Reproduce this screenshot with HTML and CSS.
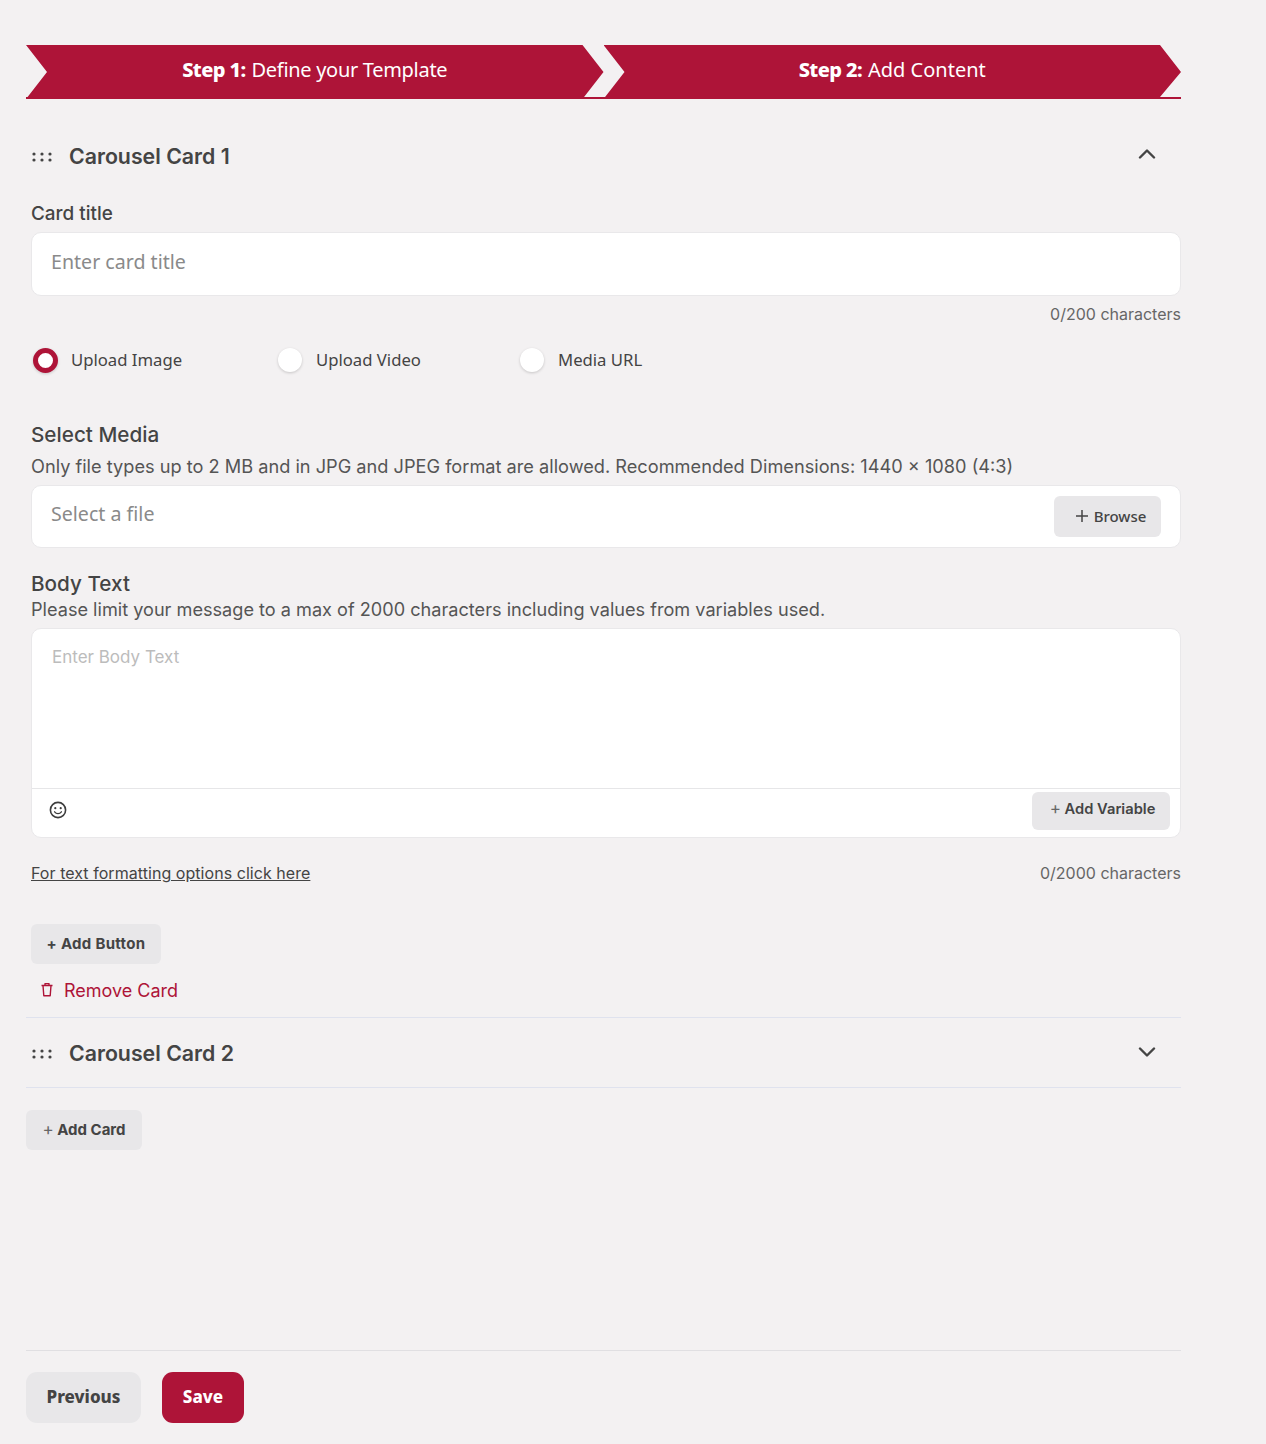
FILE: index.html
```html
<!DOCTYPE html>
<html lang="en">
<head>
<meta charset="utf-8">
<title>Add Content</title>
<link rel="stylesheet" href="styles.css">
</head>
<body>
<main class="page">
  <div class="steps">
    <div class="step"><b>Step 1:</b> <span>Define your Template</span></div>
    <div class="step"><b>Step 2:</b> <span class="plain">Add Content</span></div>
  </div>

  <section class="card">
    <header class="card-head open">
      <svg class="grip" viewBox="0 0 20 10" width="20" height="10"><g fill="#444"><circle cx="2" cy="2" r="1.6"/><circle cx="2" cy="8" r="1.6"/><circle cx="10" cy="2" r="1.6"/><circle cx="10" cy="8" r="1.6"/><circle cx="18" cy="2" r="1.6"/><circle cx="18" cy="8" r="1.6"/></g></svg>
      <h2>Carousel Card 1</h2>
      <svg class="chev up" viewBox="0 0 18 11" width="18" height="11"><path d="M2 9.5 9 2.5l7 7" fill="none" stroke="#444" stroke-width="2.4" stroke-linecap="round" stroke-linejoin="round"/></svg>
    </header>

    <div class="body">
      <label class="field-label">Card title</label>
      <div class="input title-input">Enter card title</div>
      <div class="count count-title">0/200 characters</div>

      <div class="radios">
        <div class="radio r1"><span class="dot on"></span>Upload Image</div>
        <div class="radio r2"><span class="dot"></span>Upload Video</div>
        <div class="radio"><span class="dot"></span>Media URL</div>
      </div>

      <h3 class="media-h">Select Media</h3>
      <p class="help">Only file types up to 2 MB and in JPG and JPEG format are allowed. Recommended Dimensions: 1440 × 1080 (4:3)</p>
      <div class="input file-input">
        <span>Select a file</span>
        <button class="btn browse"><svg viewBox="0 0 14 14" width="14" height="14"><path d="M7 1v12M1 7h12" stroke="#444" stroke-width="1.5" fill="none"/></svg>Browse</button>
      </div>

      <h3 class="body-h">Body Text</h3>
      <p class="help help-body">Please limit your message to a max of 2000 characters including values from variables used.</p>
      <div class="editor">
        <div class="editor-text">Enter Body Text</div>
        <div class="editor-bar">
          <svg class="smile" viewBox="0 0 18 18" width="18" height="18"><circle cx="9" cy="9" r="7.6" fill="none" stroke="#3d3d3d" stroke-width="1.6"/><circle cx="6.3" cy="7.2" r="1.1" fill="#3d3d3d"/><circle cx="11.7" cy="7.2" r="1.1" fill="#3d3d3d"/><path d="M5.6 10.8c1.8 2.4 5 2.4 6.8 0" fill="none" stroke="#3d3d3d" stroke-width="1.3" stroke-linecap="round"/></svg>
          <button class="btn add-var"><span class="plus">+</span> Add Variable</button>
        </div>
      </div>
      <div class="editor-foot">
        <a class="fmt-link" href="#">For text formatting options click here</a>
        <span class="count">0/2000 characters</span>
      </div>

      <button class="btn add-button">+ Add Button</button>
      <div class="remove">
        <svg viewBox="0 0 14 16" width="14" height="16"><path d="M1.5 3.5h11M3 3.5l.8 10.2h6.4L11 3.5M5 3.5V1.6h4v1.9" fill="none" stroke="#ae1438" stroke-width="1.4" stroke-linejoin="round"/></svg>
        Remove Card
      </div>
    </div>
  </section>

  <section class="card closed">
    <header class="card-head">
      <svg class="grip" viewBox="0 0 20 10" width="20" height="10"><g fill="#444"><circle cx="2" cy="2" r="1.6"/><circle cx="2" cy="8" r="1.6"/><circle cx="10" cy="2" r="1.6"/><circle cx="10" cy="8" r="1.6"/><circle cx="18" cy="2" r="1.6"/><circle cx="18" cy="8" r="1.6"/></g></svg>
      <h2>Carousel Card 2</h2>
      <svg class="chev" viewBox="0 0 18 11" width="18" height="11"><path d="M2 1.5 9 8.5l7-7" fill="none" stroke="#444" stroke-width="2.4" stroke-linecap="round" stroke-linejoin="round"/></svg>
    </header>
  </section>

  <button class="btn add-card"><span class="plus">+</span> Add Card</button>

  <footer class="actions">
    <button class="action prev">Previous</button>
    <button class="action save">Save</button>
  </footer>
</main>
</body>
</html>
```
FILE: styles.css
```css
* { box-sizing: border-box; }
html, body { margin: 0; background: #f3f1f2; }
body { font-family: Inter, "Liberation Sans", sans-serif; color: #444; height: 1444px; overflow: hidden; }
.page { width: 1155px; margin-left: 26px; padding-top: 45px; }
h2, h3, p { margin: 0; }
button { font-family: inherit; border: 0; cursor: pointer; }

.steps { display: flex; height: 54px; border-bottom: 2px solid #ae1438; }
.step {
  flex: 1; height: 54px; background: #ae1438; color: #fff;
  display: flex; align-items: center; justify-content: center; gap: 6px;
  font-family: "Noto Sans", sans-serif; font-size: 20px; padding-bottom: 5px;
  clip-path: polygon(0 0, calc(100% - 21px) 0, 100% 50%, calc(100% - 21px) 100%, 0 100%, 21px 50%);
}
.step b { font-weight: 800; letter-spacing: -0.6px; }
.step span { letter-spacing: -0.3px; }
.step span.plain { letter-spacing: 0; }
.step:last-child { clip-path: polygon(0 0, calc(100% - 21px) 0, 100% 50%, calc(100% - 21px) 52px, 100% 52px, 100% 100%, 0 100%, 21px 50%); }

.card-head { display: flex; align-items: center; height: 70px; padding-left: 6px; padding-right: 25px; }
.card-head.open { margin-top: 23px; height: 68px; }
.card-head h2 { flex: 1; font-size: 21.3px; font-weight: 600; margin-left: 17px; color: #444; }
.grip { flex: none; margin-top: 2px; }
.chev.up { margin-bottom: 6px; }

.body { padding-left: 5px; border-bottom: 1px solid #dfe2ee; padding-bottom: 14px; }
.field-label { display: block; font-size: 18.9px; font-weight: 500; line-height: 22px; margin-top: 13px; }
.input {
  background: #fff; border: 1px solid #e9e8ea; border-radius: 10px; color: #8a8a8a;
  font-family: "Noto Sans", sans-serif; font-size: 19.6px;
}
.title-input { height: 64px; margin-top: 7px; padding: 15px 19px; }
.count { font-size: 16px; color: #666; }
.count-title { text-align: right; margin-top: 8px; line-height: 20px; }

.radios { display: flex; align-items: center; margin-top: 22px; height: 26px; font-family: "Noto Sans", sans-serif; font-size: 16.7px; }
.radio { display: flex; align-items: center; gap: 14px; padding-left: 2px; }
.r1 { width: 245px; }
.r2 { width: 242px; }
.dot { width: 24px; height: 24px; margin-top: 2px; border-radius: 50%; background: #fff; box-shadow: 0 1px 3px rgba(0,0,0,.18); }
.dot.on { border: 5px solid #ae1438; width: 25px; height: 25px; margin-right: -1px; }

.media-h { font-size: 20.7px; font-weight: 500; line-height: 26px; margin-top: 50px; }
.help { font-size: 18.2px; line-height: 24px; color: #555; }
.media-h + .help { margin-top: 6px; }
.file-input { height: 63px; margin-top: 7px; padding: 14px 19px 0; display: flex; justify-content: space-between; }
.btn { background: #e8e7e9; color: #444; border-radius: 6px; font-weight: 600; }
.browse {
  display: flex; align-items: center; justify-content: center; gap: 5px;
  width: 107px; height: 41px; margin-top: -4px; padding-left: 12px; padding-bottom: 3px; font-family: "Noto Sans", sans-serif; font-size: 15px; font-weight: 500;
}

.body-h { font-size: 20.7px; font-weight: 500; line-height: 26px; margin-top: 23px; }
.help-body { margin-top: 0; line-height: 25px; font-size: 18.14px; }
.editor { background: #fff; border: 1px solid #e9e8ea; border-radius: 10px; height: 210px; margin-top: 6px; display: flex; flex-direction: column; }
.editor-text { height: 160px; padding: 17px 20px; font-size: 17px; color: #bcbcbc; border-bottom: 1px solid #e6e6e8; line-height: 22px; }
.editor-bar { flex: 1; display: flex; align-items: flex-start; justify-content: space-between; padding: 3px 10px 0 17px; }
.smile { margin-top: 9px; }
.add-var { width: 138px; height: 38px; font-size: 14.7px; padding-left: 9px; padding-bottom: 7px; }
.plus { font-weight: 400; color: #666; font-size: 17px; }

.editor-foot { display: flex; justify-content: space-between; align-items: center; margin-top: 25px; height: 20px; }
.fmt-link { color: #444; font-size: 16px; letter-spacing: 0.05px; }
.add-button { display: block; width: 130px; height: 40px; margin-top: 41px; padding-bottom: 3px; font-size: 15px; font-weight: 700; letter-spacing: 0.3px; }
.remove { display: flex; align-items: center; gap: 10px; margin-top: 13px; padding-left: 9px; height: 26px; color: #ae1438; font-size: 18px; }

.closed .card-head { border-bottom: 1px solid #dfe2ee; height: 70px; }
.add-card { display: block; width: 116px; height: 40px; margin-top: 22px; padding-bottom: 3px; font-size: 15px; font-weight: 700; }

.actions { margin-top: 200px; border-top: 1px solid #e0dfe2; padding-top: 21px; display: flex; gap: 21px; }
.action { height: 51px; border-radius: 11px; padding-bottom: 3px; font-family: "Noto Sans", sans-serif; font-size: 17px; font-weight: 800; }
.prev { width: 115px; background: #e8e7e9; color: #444; }
.save { width: 82px; background: #ae1438; color: #fff; }
```
